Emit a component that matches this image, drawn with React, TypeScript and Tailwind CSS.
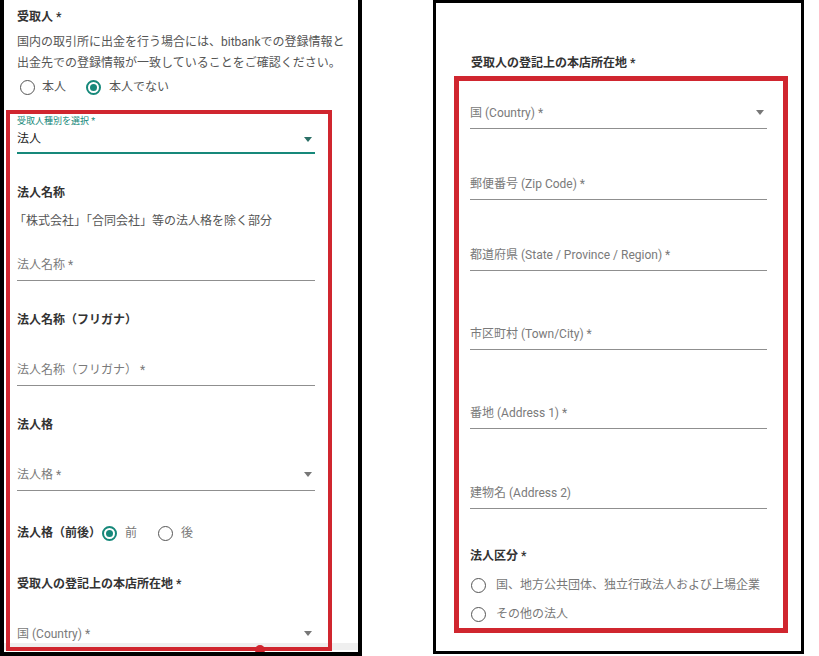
import React from 'react';

function Radio({ checked }: { checked?: boolean }) {
  if (checked) {
    return (
      <span className="w-[15px] h-[15px] rounded-full border-2 border-[#16887a] flex items-center justify-center shrink-0">
        <span className="w-[7px] h-[7px] rounded-full bg-[#16887a]" />
      </span>
    );
  }
  return <span className="block w-[15px] h-[15px] rounded-full border-[1.5px] border-[#555] shrink-0" />;
}

function Arrow({ color = '#777' }: { color?: string }) {
  return (
    <svg width="8" height="5" viewBox="0 0 8 5" className="mr-[3px]">
      <path d="M0 0h8L4 5z" fill={color} />
    </svg>
  );
}

function Field({ label, select, className }: { label: string; select?: boolean; className: string }) {
  return (
    <div className={`h-[32px] flex items-center justify-between border-b border-[#8f8f8f] ${className}`}>
      <span className="text-[12px] leading-[16px] text-[#7a7a7a]">{label}</span>
      {select && <Arrow />}
    </div>
  );
}

function Title({ children, className }: { children: React.ReactNode; className: string }) {
  return <div className={`text-[12px] leading-[16px] font-bold text-[#333] ${className}`}>{children}</div>;
}

export default function App() {
  return (
    <div className="w-[819px] h-[656px] flex bg-white font-[Roboto,'Noto_Sans_CJK_JP',sans-serif]">
      {/* left phone capture */}
      <div className="relative w-[362px] h-[656px] border-x-4 border-b-4 border-black overflow-hidden flex flex-col shrink-0">
        <div className="pl-[13px] pt-[9px]">
          <Title className="">受取人 *</Title>
          <p className="mt-[7px] text-[12px] leading-[21px] text-[#555] whitespace-nowrap">
            国内の取引所に出金を行う場合には、bitbankでの登録情報と
            <br />
            出金先での登録情報が一致していることをご確認ください。
          </p>
          <div className="mt-[2px] h-[22px] flex items-center pl-[3px] text-[12px] text-[#555]">
            <Radio />
            <span className="ml-[7px]">本人</span>
            <span className="ml-[20px]">
              <Radio checked />
            </span>
            <span className="ml-[8px]">本人でない</span>
          </div>
        </div>

        <div className="absolute left-0 right-0 top-[643px] h-[7px] bg-[#efefef] z-0" />
        <div className="absolute left-[251px] top-[645px] w-[10px] h-[10px] rounded-full bg-[#d0262f] z-20" />

        <div className="relative z-10 mt-[12px] ml-[2px] w-[326px] h-[541px] shrink-0 border-4 border-[#d0262f] pl-[7px] pr-[13px] overflow-hidden">
          <div className="mt-[2px] text-[9px] leading-[10px] text-[#16887a]">受取人種別を選択 *</div>
          <div className="h-[28px] flex items-center justify-between border-b-2 border-[#16887a]">
            <span className="text-[12px] leading-[16px] text-[#222]">法人</span>
            <Arrow color="#2b6f66" />
          </div>

          <Title className="mt-[31px]">法人名称</Title>
          <div className="mt-[12px] -ml-[3px] text-[12px] leading-[16px] text-[#555]">
            「株式会社」「合同会社」等の法人格を除く部分
          </div>
          <Field label="法人名称 *" className="mt-[20px]" />

          <Title className="mt-[31px]">法人名称（フリガナ）</Title>
          <Field label="法人名称（フリガナ） *" className="mt-[26px]" />

          <Title className="mt-[31px]">法人格</Title>
          <Field label="法人格 *" select className="mt-[26px]" />

          <div className="mt-[31px] h-[22px] flex items-center text-[12px]">
            <span className="font-bold text-[#333]">法人格（前後）</span>
            <span className="ml-[1px]">
              <Radio checked />
            </span>
            <span className="ml-[8px] text-[#777]">前</span>
            <span className="ml-[21px]">
              <Radio />
            </span>
            <span className="ml-[8px] text-[#777]">後</span>
          </div>

          <Title className="mt-[32px]">受取人の登記上の本店所在地 *</Title>
          <Field label="国 (Country) *" select className="mt-[26px]" />
        </div>
      </div>

      {/* right phone capture */}
      <div className="ml-[71px] w-[371px] h-[654px] border-[3px] border-black shrink-0 flex flex-col">
        <Title className="mt-[52px] pl-[35px]">受取人の登記上の本店所在地 *</Title>
        <div className="mt-[5px] ml-[18px] w-[334px] h-[557px] border-[5px] border-[#d0262f] pl-[11px] pr-[16px]">
          <Field label="国 (Country) *" select className="mt-[16px]" />
          <Field label="郵便番号 (Zip Code) *" className="mt-[39px]" />
          <Field label="都道府県 (State / Province / Region) *" className="mt-[39px]" />
          <Field label="市区町村 (Town/City) *" className="mt-[47px]" />
          <Field label="番地 (Address 1) *" className="mt-[47px]" />
          <Field label="建物名 (Address 2)" className="mt-[48px]" />

          <Title className="mt-[39px]">法人区分 *</Title>
          <div className="mt-[10px] h-[22px] flex items-center pl-[1px] text-[12px] text-[#777]">
            <Radio />
            <span className="ml-[10px]">国、地方公共団体、独立行政法人および上場企業</span>
          </div>
          <div className="mt-[7px] h-[22px] flex items-center pl-[1px] text-[12px] text-[#777]">
            <Radio />
            <span className="ml-[10px]">その他の法人</span>
          </div>
        </div>
      </div>
    </div>
  );
}
